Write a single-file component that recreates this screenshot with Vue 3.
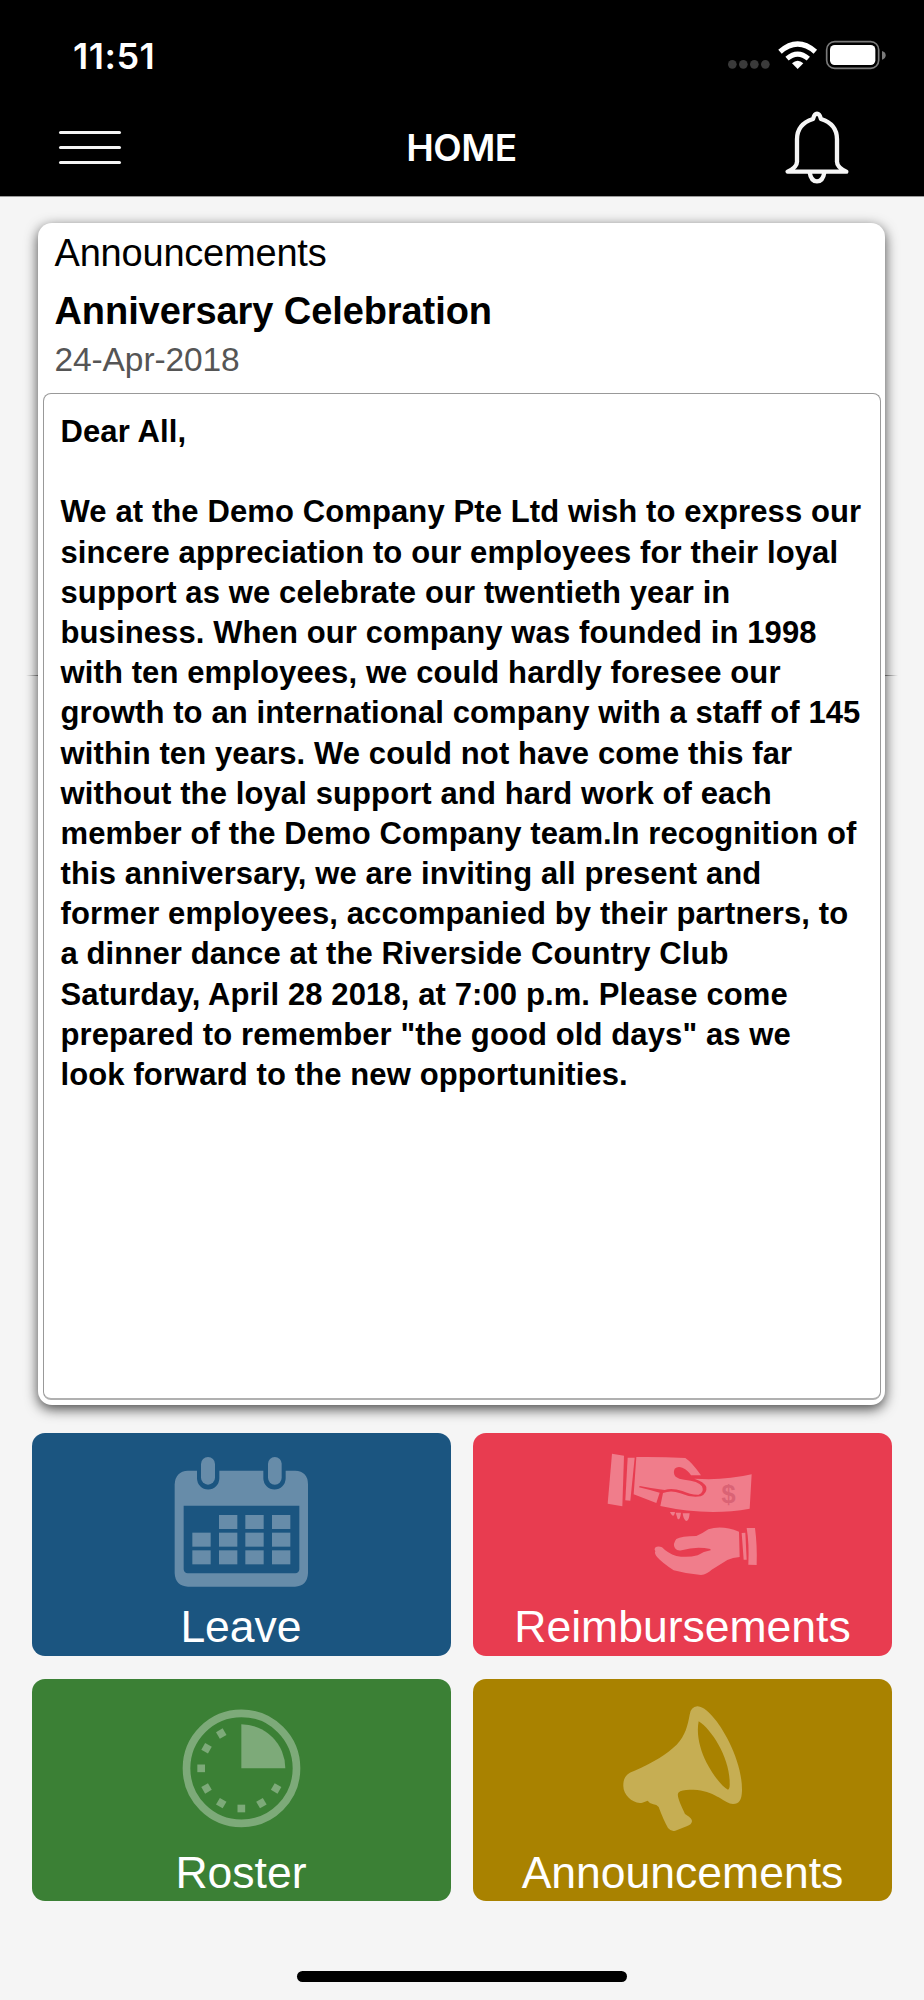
<template>
  <div class="home-screen">
    <header class="top-bar">
      <div class="status-bar">
        <span class="clock">{{ time }}</span>
        <svg class="status-icons" viewBox="0 0 480 90" aria-hidden="true">
          <g fill="#3a3a3a">
            <circle v-for="x in signalDots" :key="x" :cx="x" cy="73" r="13" />
          </g>
          <!-- wifi -->
          <g fill="none" stroke="#fff" stroke-width="16">
            <path d="M156 35 Q209 -11 262 35" />
            <path d="M177 56 Q209 29 241 56" stroke-width="15" />
          </g>
          <path d="M192 70 Q209 54 226 70 L209 87 Z" fill="#fff" />
          <!-- battery -->
          <rect x="296" y="5" width="156" height="80" rx="24" fill="none" stroke="#7a7a7a" stroke-width="5" />
          <rect x="306" y="15" width="136" height="60" rx="14" fill="#fff" />
          <path d="M462 33 Q473 36 473 46 Q473 56 462 59 Z" fill="#7a7a7a" />
        </svg>
      </div>
      <nav class="nav-bar">
        <button class="icon-button menu-button" aria-label="Menu">
          <span></span>
          <span></span>
          <span></span>
        </button>
        <h1>HOME</h1>
        <button class="icon-button bell-button" aria-label="Notifications">
          <svg class="bell" viewBox="0 0 192 222" fill="none" stroke="#f6f6f6" stroke-width="13" stroke-linejoin="round" stroke-linecap="round">
            <path d="M8 182 H184 Q154 168 156 149 V85 Q156 39 108 24 Q104 8 96 8 Q88 8 84 24 Q36 39 36 85 V149 Q38 168 8 182 Z" />
            <path d="M74 184 Q78 211 96 211 Q114 211 118 184" />
          </svg>
        </button>
      </nav>
    </header>

    <main>
      <section class="card">
        <div class="card-head">
          <p class="card-section">Announcements</p>
          <h2>{{ announcement.title }}</h2>
          <p class="card-date">{{ announcement.date }}</p>
        </div>
        <div class="card-body">
          <p v-for="(line, i) in announcement.lines" :key="i">{{ line }}</p>
        </div>
      </section>

      <div class="tiles">
        <a class="tile leave">
          <svg viewBox="95 219 1257 492" fill="#678ca9">
            <rect x="602" y="291" width="42" height="83" rx="21" />
            <rect x="803" y="291" width="41" height="83" rx="20.5" />
            <path
              fill-rule="evenodd"
              d="M563 332 H590 V355 A33 33 0 0 0 657 355 V332 H789 V355 A33 33 0 0 0 856 355 V332 H884 Q923 334 923 373 V640 Q921 678 884 680 H563 Q525 678 523 640 V373 Q525 334 563 332 Z M550 437 V628 Q551 639 562 640 H885 Q896 639 897 628 V437 Z"
            />
            <rect v-for="d in days" :key="d.x + '-' + d.y" :x="d.x" :y="d.y" width="55" height="42" />
          </svg>
          <span>Leave</span>
        </a>

        <a class="tile reimbursements">
          <svg viewBox="40 219 1257 492" fill="#f07d8b">
            <path d="M457 281 L493 287 L488 439 L444 431 Z" />
            <path d="M504 293 H525 L512 422 L497 421 Z" />
            <path d="M530 291 Q605 290 677 294 Q697 307 724 346 L694 346 Q687 332 668 323 Q654 318 645 326 Q639 340 648 350 Q657 357 674 359 Q716 363 727 379 Q735 398 717 404 Q694 405 668 393 Q636 382 615 390 Q575 385 540 378 L538 382 Q571 390 600 398 L590 429 L522 403 Z" />
            <path d="M704 356 Q795 362 876 343 L870 446 Q744 469 602 438 L610 399 Q635 389 662 400 Q694 414 723 409 Q743 400 740 381 Q733 365 704 356 Z" />
            <path d="M631 456 H646 Q642 479 631 456 Z M648 458 H664 Q661 482 654 477 Z M669 460 H690 Q688 484 679 483 Q671 478 669 460 Z" />
            <path d="M838 515 Q786 494 746 508 Q726 522 710 528 Q665 528 650 537 Q638 552 646 565 Q653 574 666 571 Q709 558 752 567 L753 571 Q732 574 714 586 Q683 594 650 588 Q624 580 607 562 Q595 557 586 563 Q583 568 587 574 Q583 580 593 592 Q608 609 642 631 Q681 642 724 645 Q742 642 756 629 L803 600 Q819 592 840 591 Z" />
            <path d="M846 519 L857 518 L861 599 L852 599 Z M861 504 H886 Q893 557 891 615 L866 614 Q869 551 861 504 Z" />
            <text x="807" y="430" class="dollar">$</text>
          </svg>
          <span>Reimbursements</span>
        </a>

        <a class="tile roster">
          <svg viewBox="95 25 1257 492" fill="#7daa79">
            <circle cx="723.500" cy="293" r="165" fill="none" stroke="#7daa79" stroke-width="23" />
            <path d="M723 293 V161 A132 132 0 0 1 855 293 Z" />
            <rect
              v-for="angle in clockTicks"
              :key="angle"
              x="711.500"
              y="161"
              width="23"
              height="23"
              :transform="`rotate(${angle} 723 293)`"
            />
          </svg>
          <span>Roster</span>
        </a>

        <a class="tile announcements">
          <svg viewBox="40 25 1257 492" fill="#c6ae53">
            <path
              fill-rule="evenodd"
              d="M713 107 C738 107 777 151 808 213 C832 262 848 315 847 361 C846 387 839 400 820 400 C796 399 769 364 713 358 C687 356 665 356 656 366 C650 376 663 401 676 430 C689 438 697 444 697 452 Q696 462 681 467 L647 480 Q635 484 625 472 Q611 447 597 409 Q591 402 581 401 Q570 399 564 390 L548 396 C521 402 491 373 491 347 C490 323 500 308 523 301 C584 273 620 252 651 222 C677 195 684 164 690 132 Q693 109 713 107 Z M717 152 C709 192 722 239 740 275 C762 317 788 348 805 357 Q811 355 810 337 C811 264 757 177 717 152 Z"
            />
          </svg>
          <span>Announcements</span>
        </a>
      </div>
    </main>

    <div class="home-indicator"></div>
  </div>
</template>

<script setup>
const time = '11:51';

const signalDots = [13, 46, 79, 112];

const announcement = {
  title: 'Anniversary Celebration',
  date: '24-Apr-2018',
  lines: [
    'Dear All,',
    '',
    'We at the Demo Company Pte Ltd wish to express our',
    'sincere appreciation to our employees for their loyal',
    'support as we celebrate our twentieth year in',
    'business. When our company was founded in 1998',
    'with ten employees, we could hardly foresee our',
    'growth to an international company with a staff of 145',
    'within ten years. We could not have come this far',
    'without the loyal support and hard work of each',
    'member of the Demo Company team.In recognition of',
    'this anniversary, we are inviting all present and',
    'former employees, accompanied by their partners, to',
    'a dinner dance at the Riverside Country Club',
    'Saturday, April 28 2018, at 7:00 p.m. Please come',
    'prepared to remember "the good old days" as we',
    'look forward to the new opportunities.'
  ]
};

// calendar grid, the first cell of the month is empty
const days = [465, 518, 571].flatMap((y, row) =>
  [576, 656, 735, 815]
    .filter((x, col) => row > 0 || col > 0)
    .map((x) => ({ x, y }))
);

// hours 4 to 11, the rest is covered by the quarter
const clockTicks = [120, 150, 180, 210, 240, 270, 300, 330];
</script>

<style>
body {
  margin: 0;
  background: #f5f5f5;
}
</style>

<style scoped>
.home-screen {
  display: flex;
  flex-direction: column;
  height: 2000px;
  box-sizing: border-box;
  background: #f5f5f5;
  font-family: "Liberation Sans", Arial, sans-serif;
  color: #000;
}

h1,
h2,
p {
  margin: 0;
}

/* Top bar */
.top-bar {
  height: 197px;
  box-sizing: border-box;
  background: #000;
  border-bottom: 1px solid #999;
  color: #fff;
  font-family: Inter, sans-serif;
}

.status-bar {
  display: flex;
  justify-content: space-between;
  height: 98px;
  padding: 0 36px 0 73px;
}

.clock {
  padding-top: 34px;
  font-size: 36px;
  font-weight: 600;
  line-height: 44px;
  letter-spacing: 0.5px;
}

.status-icons {
  width: 160px;
  height: 30px;
  margin-top: 40px;
}

.nav-bar {
  display: grid;
  grid-template-columns: 180px 1fr 180px;
  align-items: center;
  height: 98px;
}

.nav-bar h1 {
  padding: 1px 1px 0 0;
  text-align: center;
  font-size: 37px;
  font-weight: 600;
  line-height: 44px;
  letter-spacing: -0.5px;
}

.icon-button {
  display: flex;
  align-items: center;
  justify-content: center;
  padding: 0;
  border: 0;
  background: none;
}

.menu-button {
  flex-direction: column;
  gap: 12px;
}

.menu-button span {
  width: 62px;
  height: 3px;
  border-radius: 2px;
  background: #f4f4f4;
}

.bell-button {
  justify-content: flex-start;
  padding: 1px 0 0 41px;
}

.bell {
  width: 64px;
  height: 74px;
}

/* Announcement card */
main {
  position: relative;
  padding: 26px 31px 0 31.5px;
}

main::before {
  content: "";
  position: absolute;
  top: 478px;
  left: 26px;
  right: 26px;
  height: 1px;
  background: linear-gradient(to right, transparent, #888 12px, #888 860px, transparent);
}

.card {
  position: relative;
  display: flex;
  flex-direction: column;
  height: 1182px;
  margin: 0 8px 0 6px;
  padding: 0 4px 5px 5px;
  box-sizing: border-box;
  border-radius: 14px;
  background: #fff;
  box-shadow: 0 4px 13px rgba(0, 0, 0, 0.72);
}

.card-head {
  height: 170px;
  padding: 7px 12px 0;
  box-sizing: border-box;
}

.card-section {
  font-size: 38px;
  line-height: 46px;
  letter-spacing: -0.2px;
}

.card-head h2 {
  margin-top: 12px;
  font-size: 38px;
  line-height: 46px;
  letter-spacing: -0.08px;
}

.card-date {
  margin-top: 6px;
  color: #555;
  font-size: 33.5px;
  line-height: 40px;
  letter-spacing: -0.1px;
}

.card-body {
  flex: 1;
  padding: 18px 17px;
  border: 1px solid #999;
  border-bottom: 2px solid #b0b0b0;
  border-radius: 8px;
}

.card-body p {
  height: 40.2px;
  font-size: 31px;
  font-weight: bold;
  line-height: 40.2px;
  letter-spacing: 0.11px;
  white-space: nowrap;
}

/* Tiles */
.tiles {
  display: grid;
  grid-template-columns: 419px 419px;
  gap: 23px 22.5px;
  margin-top: 28px;
}

.tile {
  display: flex;
  flex-direction: column;
  height: 222.5px;
  border-radius: 13px;
  overflow: hidden;
  color: #fff;
  text-align: center;
}

.tile svg {
  display: block;
  flex: none;
  width: 419px;
  height: 164px;
}

.tile span {
  font-size: 44.5px;
  line-height: 60px;
}

.leave {
  background: #1b5580;
}

.reimbursements {
  background: #e83c50;
}

.roster {
  background: #3b8035;
}

.announcements {
  background: #a98200;
}

.dollar {
  fill: #da6375;
  font-size: 76px;
  font-weight: bold;
  text-anchor: middle;
}

.home-indicator {
  width: 330px;
  height: 11px;
  margin: auto auto 18px;
  border-radius: 6px;
  background: #000;
}
</style>
